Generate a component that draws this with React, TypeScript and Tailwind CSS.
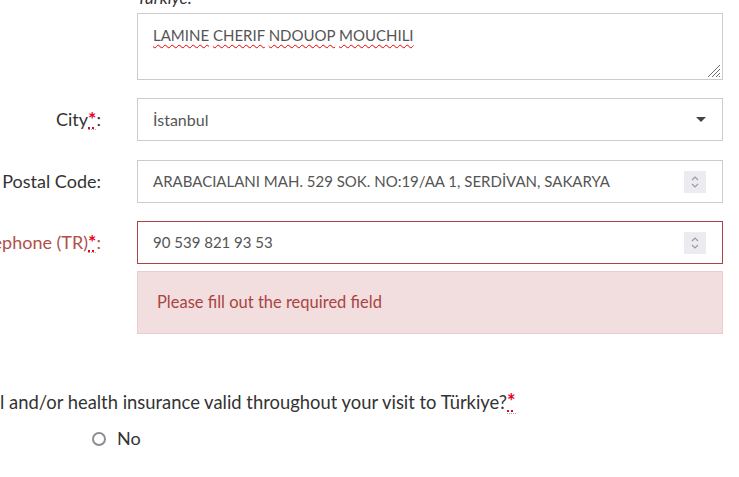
import React from "react";

const font = { fontFamily: "Lato, 'Noto Sans', sans-serif" };

function Req() {
  return (
    <span className="text-[#e8001c] font-bold text-[1.1em] underline decoration-dotted decoration-[#e8001c] underline-offset-[1px] border-b border-dotted border-[#aaa] leading-none">
      *
    </span>
  );
}

function Spinner() {
  return (
    <span className="w-[22px] h-[22px] bg-[#ebebf0] flex items-center justify-center">
      <svg width="10" height="16" viewBox="0 0 10 16" fill="none" stroke="#9a9aa4" strokeWidth="1.2">
        <path d="M2 6 L5 3 L8 6" />
        <path d="M2 10 L5 13 L8 10" />
      </svg>
    </span>
  );
}

function Label({ children, error }: { children: React.ReactNode; error?: boolean }) {
  return (
    <div
      className={`w-[101px] shrink-0 overflow-hidden flex justify-end items-center whitespace-nowrap text-[18px] ${
        error ? "text-[#b0504a]" : "text-[#333]"
      }`}
    >
      {children}
    </div>
  );
}

const wavy = "underline decoration-wavy decoration-[#e00] decoration-1 underline-offset-[3px]";

export default function App() {
  return (
    <div className="w-[739px] h-[477px] overflow-hidden bg-white text-[15px]" style={font}>
      {/* Textarea row */}
      <div className="flex">
        <div className="w-[101px] shrink-0" />
        <div className="ml-[36px] w-[586px]">
          <div className="italic text-[#333] text-[17px] leading-[20px] mt-[-12px] mb-[5px]">Türkiye:</div>
          <div className="relative h-[67px] border border-[#ccc] pl-[15px] pt-[10px] text-[#555] leading-[22px]">
            <span className={wavy}>LAMINE</span> <span className={wavy}>CHERIF</span>{" "}
            <span className={wavy}>NDOUOP</span> <span className={wavy}>MOUCHILI</span>
            <svg className="absolute right-[1px] bottom-[1px]" width="16" height="16" viewBox="0 0 16 16" stroke="#6e6e6e" strokeWidth="1">
              <path d="M15 3 L3 15" />
              <path d="M15 7 L7 15" />
              <path d="M15 11 L11 15" />
              <path d="M15 14 L14 15" />
            </svg>
          </div>
        </div>
      </div>

      {/* City */}
      <div className="flex mt-[18px]">
        <Label>
          City<Req />:
        </Label>
        <div className="ml-[36px] w-[586px] h-[43px] border border-[#ccc] flex items-center justify-between pl-[15px] pr-[16px] text-[#555] text-[16px]">
          <span>İstanbul</span>
          <svg width="10" height="5" viewBox="0 0 10 5">
            <path d="M0 0 L10 0 L5 5 Z" fill="#444" />
          </svg>
        </div>
      </div>

      {/* Postal */}
      <div className="flex mt-[19px]">
        <Label>Postal Code:</Label>
        <div className="ml-[36px] w-[586px] h-[43px] border border-[#ccc] flex items-center justify-between pl-[15px] pr-[16px] text-[#555]">
          <span className="whitespace-nowrap">ARABACIALANI MAH. 529 SOK. NO:19/AA 1, SERDİVAN, SAKARYA</span>
          <Spinner />
        </div>
      </div>

      {/* Phone */}
      <div className="flex mt-[18px]">
        <Label error>
          Telephone (TR)<Req />:
        </Label>
        <div className="ml-[36px] w-[586px] h-[43px] border border-[#a94442] flex items-center justify-between pl-[15px] pr-[16px] text-[#555]">
          <span>90 539 821 93 53</span>
          <Spinner />
        </div>
      </div>

      {/* Error */}
      <div className="flex mt-[7px]">
        <div className="w-[101px] shrink-0" />
        <div className="ml-[36px] w-[586px] h-[63px] border border-[#ebccd1] bg-[#f2dede] flex items-center pl-[19px] text-[#a94442] text-[16.5px]">
          Please fill out the required field
        </div>
      </div>

      {/* Question */}
      <div className="flex mt-[56px] whitespace-nowrap text-[#333] text-[18.4px] leading-[24px]">
        <span className="w-0 flex justify-end">Do you have trave</span>
        <span>
          l and/or health insurance valid throughout your visit to Türkiye?<Req />
        </span>
      </div>

      {/* Radio */}
      <div className="flex items-center mt-[11px] pl-[92px] text-[#333] text-[18px]">
        <span className="w-[14px] h-[14px] rounded-full border-2 border-[#8d8d93] bg-white" />
        <span className="ml-[11px]">No</span>
      </div>
    </div>
  );
}
